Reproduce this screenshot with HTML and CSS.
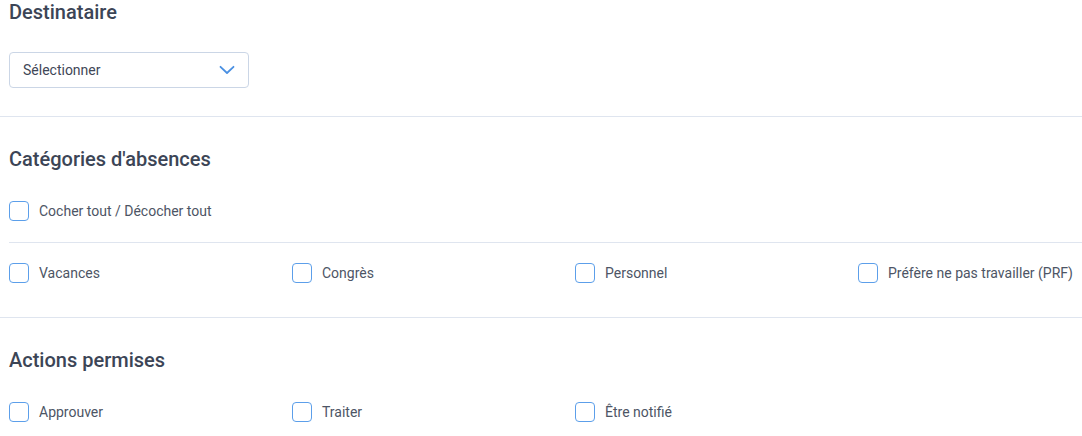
FILE: index.html
```html
<!DOCTYPE html>
<html lang="fr">
<head>
<meta charset="utf-8">
<link rel="stylesheet" href="styles.css">
</head>
<body>
<section class="section first">
  <h2 class="title">Destinataire</h2>
  <div class="select">
    <span>Sélectionner</span>
    <svg class="chev" width="16" height="10" viewBox="0 0 16 10"><path d="M1.5 1.8 L8 8 L14.5 1.8" fill="none" stroke="#4a90e2" stroke-width="1.8" stroke-linecap="round" stroke-linejoin="round"/></svg>
  </div>
</section>
<hr class="divider">
<section class="section cats-section">
  <h2 class="title">Catégories d'absences</h2>
  <label class="check all"><span class="box"></span>Cocher tout / Décocher tout</label>
  <hr class="inner-divider">
  <div class="grid">
    <label class="check"><span class="box"></span>Vacances</label>
    <label class="check"><span class="box"></span>Congrès</label>
    <label class="check"><span class="box"></span>Personnel</label>
    <label class="check"><span class="box"></span>Préfère ne pas travailler (PRF)</label>
  </div>
</section>
<hr class="divider">
<section class="section">
  <h2 class="title">Actions permises</h2>
  <div class="grid actions">
    <label class="check"><span class="box"></span>Approuver</label>
    <label class="check"><span class="box"></span>Traiter</label>
    <label class="check"><span class="box"></span>Être notifié</label>
  </div>
</section>
</body>
</html>
```
FILE: styles.css
```css
* { box-sizing: border-box; }
html, body { margin: 0; padding: 0; background: #fff; }
body {
  font-family: Roboto, "Liberation Sans", sans-serif;
  color: #4a5263;
  font-size: 14px;
  width: 1082px;
  height: 436px;
  overflow: hidden;
}
.section { padding: 30px 0 0 9px; }
.section.first { padding-top: 0; }
.section.cats-section { padding-bottom: 6px; }
.title {
  margin: 0;
  font-size: 20px;
  line-height: 24px;
  font-weight: 500;
  color: #3c4556;
}
.select {
  margin-top: 28px;
  width: 240px;
  height: 36px;
  border: 1px solid #cbd6e6;
  border-radius: 4px;
  display: flex;
  align-items: center;
  justify-content: space-between;
  padding: 0 13px 0 13px;
  font-size: 14px;
  color: #3f4757;
}
.chev { display: block; margin-top: -1px; }
.divider {
  margin: 28px 0 0 0;
  border: 0;
  border-top: 1px solid #dfe5ef;
  height: 0;
}
.inner-divider {
  margin: 21px 0 20px 0;
  border: 0;
  border-top: 1px solid #dfe5ef;
  height: 0;
}
.check {
  display: flex;
  align-items: center;
  gap: 10px;
  height: 20px;
  font-size: 14px;
  color: #4d5565;
}
.check.all { margin-top: 30px; }
.box {
  width: 20px;
  height: 20px;
  border: 1px solid #5c9fea;
  border-radius: 4px;
  flex: none;
}
.grid {
  display: grid;
  grid-template-columns: 283px 283px 283px 1fr;
}
.grid.actions { margin-top: 30px; }
```
